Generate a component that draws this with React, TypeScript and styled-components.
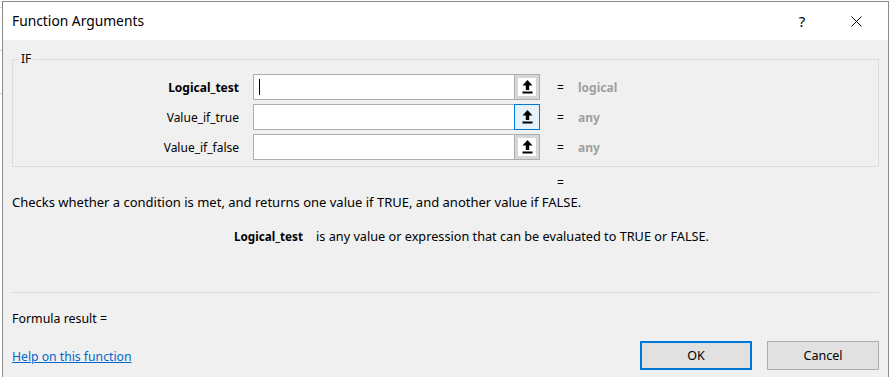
import * as React from 'react';
import styled, { createGlobalStyle } from 'styled-components';

// ----------------------------------------
// data
// ----------------------------------------
type Arg = {
  name: string;
  type: string;
  bold?: boolean;
  active?: boolean;
  focused?: boolean;
};

const args: Arg[] = [
  { name: 'Logical_test', type: 'logical', bold: true, active: true },
  { name: 'Value_if_true', type: 'any', focused: true },
  { name: 'Value_if_false', type: 'any' },
];

// ----------------------------------------
// icons
// ----------------------------------------
const CollapseIcon = () => (
  <svg width="11" height="14" viewBox="0 0 11 14">
    <polygon points="5.5,0 0.5,5.5 3.8,5.5 3.8,10 7.2,10 7.2,5.5 10.5,5.5" fill="#000" />
    <rect x="0.5" y="11.5" width="10" height="2" fill="#000" />
  </svg>
);

const CloseIcon = () => (
  <svg width="11" height="11" viewBox="0 0 11 11">
    <path d="M0.5 0.5 L10.5 10.5 M10.5 0.5 L0.5 10.5" stroke="#000" strokeWidth="1" />
  </svg>
);

// ----------------------------------------
// component
// ----------------------------------------
export default function App() {
  return (
    <>
      <GlobalStyle />
      <Sheet>
        <Dialog>
          <TitleBar>
            <Title>Function Arguments</Title>
            <TitleButton>?</TitleButton>
            <TitleButton>
              <CloseIcon />
            </TitleButton>
          </TitleBar>

          <Body>
            <GroupBox>
              <Legend>IF</Legend>
              <ArgGrid>
                {args.map((arg) => (
                  <React.Fragment key={arg.name}>
                    <ArgLabel $bold={arg.bold}>{arg.name}</ArgLabel>
                    <ArgField>
                      <TextBox>{arg.active && <Caret />}</TextBox>
                      <CollapseButton $focused={arg.focused}>
                        <CollapseInner $focused={arg.focused}>
                          <CollapseIcon />
                        </CollapseInner>
                      </CollapseButton>
                    </ArgField>
                    <Equals>=</Equals>
                    <ArgType>{arg.type}</ArgType>
                  </React.Fragment>
                ))}
              </ArgGrid>
            </GroupBox>

            <ResultEquals>=</ResultEquals>
            <Description>
              Checks whether a condition is met, and returns one value if TRUE, and another value if FALSE.
            </Description>
            <ArgHelp>
              <ArgHelpName>Logical_test</ArgHelpName>
              <ArgHelpText>is any value or expression that can be evaluated to TRUE or FALSE.</ArgHelpText>
            </ArgHelp>

            <Separator />
            <FormulaResult>Formula result =</FormulaResult>

            <Footer>
              <HelpLink href="#">Help on this function</HelpLink>
              <ButtonRow>
                <DialogButton $default>OK</DialogButton>
                <DialogButton>Cancel</DialogButton>
              </ButtonRow>
            </Footer>
          </Body>
        </Dialog>
      </Sheet>
    </>
  );
}

// ----------------------------------------
// styles
// ----------------------------------------
const GlobalStyle = createGlobalStyle`
  html, body {
    margin: 0;
    padding: 0;
    background: #ffffff;
    overflow: hidden;
  }
  body {
    font-family: "Noto Sans", "Open Sans", sans-serif;
    font-size: 12px;
    color: #000;
  }
`;

const Sheet = styled.div`
  width: 890px;
  height: 377px;
  padding: 1px 0 0 2px;
  box-sizing: border-box;
  background:
    linear-gradient(#d4d4d4, #d4d4d4) 0 7px / 2px 1px no-repeat,
    linear-gradient(#d4d4d4, #d4d4d4) 0 50px / 2px 1px no-repeat,
    linear-gradient(#d4d4d4, #d4d4d4) 0 93px / 2px 1px no-repeat,
    #ffffff;
`;

const Dialog = styled.div`
  width: 887px;
  height: 380px;
  box-sizing: border-box;
  border: 1px solid #8a8a8a;
  display: flex;
  flex-direction: column;
  background: #f0f0f0;
`;

const TitleBar = styled.div`
  height: 38px;
  flex: none;
  background: #ffffff;
  display: flex;
  align-items: center;
  padding-left: 9px;
`;

const Title = styled.div`
  flex: 1;
  font-size: 13.8px;
  margin-top: -1px;
`;

const TitleButton = styled.div`
  width: 46px;
  height: 38px;
  display: flex;
  align-items: center;
  justify-content: center;
  font-size: 15px;
  margin-right: 8px;
  &:last-child {
    margin-right: 9px;
  }
`;

const Body = styled.div`
  flex: 1;
  display: flex;
  flex-direction: column;
  padding: 0 9px 0 9px;
`;

const GroupBox = styled.fieldset`
  margin: 11px 0 0 0;
  padding: 7px 0 6px 0;
  border: 1px solid #dcdcdc;
  min-width: 0;
`;

const Legend = styled.legend`
  margin-left: 6px;
  padding: 0 2px;
  line-height: 16px;
`;

const ArgGrid = styled.div`
  display: grid;
  grid-template-columns: 226px 287px 6px auto;
  column-gap: 14px;
  row-gap: 4px;
  align-items: center;
  & > :nth-child(4n + 3) {
    margin-left: 3px;
  }
  & > :nth-child(4n) {
    margin-left: 4px;
  }
`;

const ArgLabel = styled.div<{ $bold?: boolean }>`
  text-align: right;
  font-weight: ${(p) => (p.$bold ? 700 : 400)};
`;

const ArgField = styled.div`
  display: flex;
  height: 26px;
`;

const TextBox = styled.div`
  flex: 1;
  box-sizing: border-box;
  border: 1px solid #adadad;
  border-right: none;
  background: #ffffff;
  position: relative;
`;

const Caret = styled.span`
  position: absolute;
  left: 5px;
  top: 4px;
  width: 1px;
  height: 16px;
  background: #000;
`;

const CollapseButton = styled.div<{ $focused?: boolean }>`
  width: 26px;
  box-sizing: border-box;
  border: 1px solid ${(p) => (p.$focused ? '#0078d7' : '#adadad')};
  padding: 3px;
  background: ${(p) => (p.$focused ? '#e5f1fb' : '#d6d6d6')};
`;

const CollapseInner = styled.div<{ $focused?: boolean }>`
  height: 100%;
  background: ${(p) => (p.$focused ? '#e5f1fb' : '#ffffff')};
  display: flex;
  align-items: center;
  justify-content: center;
`;

const Equals = styled.div`
  text-align: center;
`;

const ArgType = styled.div`
  font-weight: 700;
  color: #a0a0a0;
`;

const ResultEquals = styled.div`
  margin: 8px 0 0 545px;
  line-height: 16px;
`;

const Description = styled.div`
  margin-top: 3px;
  line-height: 16px;
  font-size: 13px;
`;

const ArgHelp = styled.div`
  margin: 18px 0 0 222px;
  line-height: 16px;
  display: flex;
  align-items: baseline;
  gap: 13px;
`;

const ArgHelpName = styled.span`
  font-weight: 700;
  font-size: 11.7px;
`;

const ArgHelpText = styled.span`
  font-size: 12.7px;
`;

const Separator = styled.div`
  margin-top: 48px;
  height: 1px;
  background: #dcdcdc;
`;

const FormulaResult = styled.div`
  margin-top: 18px;
  line-height: 16px;
  font-size: 12.4px;
`;

const Footer = styled.div`
  margin-top: 14px;
  display: flex;
  align-items: center;
  justify-content: space-between;
`;

const HelpLink = styled.a`
  color: #0066cc;
  text-decoration: underline;
  font-size: 12.2px;
  margin-top: 1px;
`;

const ButtonRow = styled.div`
  display: flex;
  gap: 15px;
`;

const DialogButton = styled.button<{ $default?: boolean }>`
  width: 112px;
  height: 29px;
  box-sizing: border-box;
  font-family: inherit;
  font-size: 12.5px;
  color: #000;
  background: #e1e1e1;
  border: ${(p) => (p.$default ? '2px solid #0078d7' : '1px solid #adadad')};
  padding: 0;
`;
